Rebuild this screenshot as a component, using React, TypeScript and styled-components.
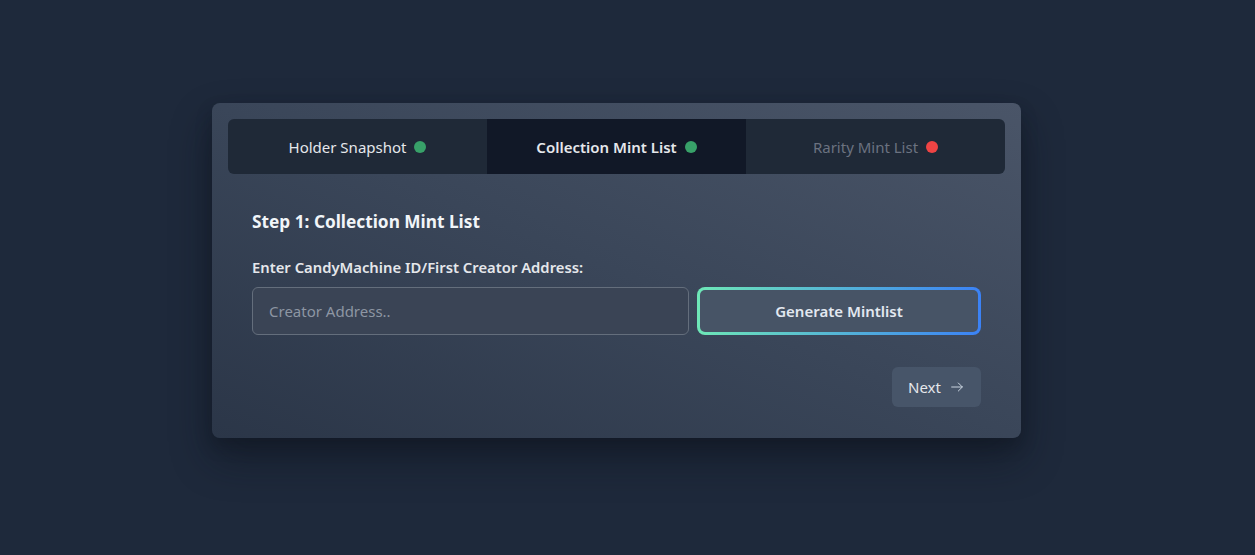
import React from "react";
import styled, { createGlobalStyle } from "styled-components";

const Global = createGlobalStyle`
  html, body { margin: 0; padding: 0; background: #1e293b; }
  body { font-family: "Segoe UI", "Noto Sans", "Open Sans", sans-serif; }
  * { box-sizing: border-box; }
`;

const Page = styled.div`
  min-height: 555px;
  display: flex;
  justify-content: flex-start;
  align-items: flex-start;
  padding: 103px 0 0 212px;
`;

const Card = styled.div`
  width: 809px;
  height: 335px;
  border-radius: 8px;
  background: linear-gradient(to top right, #2b3648 0%, #3a4659 50%, #4a5568 100%);
  box-shadow: 0 20px 40px rgba(10, 15, 25, 0.45), 0 8px 16px rgba(10, 15, 25, 0.25);
  padding: 16px;
  display: flex;
  flex-direction: column;
`;

const Tabs = styled.div`
  display: grid;
  grid-template-columns: repeat(3, 1fr);
  height: 55px;
  background: #1f2937;
  border-radius: 6px;
  overflow: hidden;
`;

const Tab = styled.div<{ $active?: boolean; $disabled?: boolean }>`
  display: flex;
  align-items: center;
  justify-content: center;
  gap: 8px;
  font-size: 15px;
  font-weight: ${(p) => (p.$active ? 600 : 400)};
  color: ${(p) => (p.$disabled ? "#6b7280" : "#e5e7eb")};
  background: ${(p) => (p.$active ? "#111827" : "transparent")};
`;

const Dot = styled.span<{ $color: string }>`
  width: 12px;
  height: 12px;
  border-radius: 50%;
  background: ${(p) => p.$color};
  display: inline-block;
`;

const Body = styled.div`
  padding: 36px 24px 0 24px;
  display: flex;
  flex-direction: column;
`;

const Heading = styled.h2`
  margin: 0;
  font-size: 17.25px;
  font-weight: 700;
  color: #f1f5f9;
  line-height: 24px;
`;

const Label = styled.label`
  margin-top: 23px;
  font-size: 14.8px;
  font-weight: 600;
  color: #e5e7eb;
  line-height: 20px;
`;

const Row = styled.div`
  margin-top: 10px;
  display: flex;
  gap: 8px;
`;

const Input = styled.input`
  width: 437px;
  height: 48px;
  border-radius: 6px;
  border: 1px solid #646e7c;
  background: #3a4455;
  padding: 0 16px;
  font-family: inherit;
  font-size: 15px;
  color: #e5e7eb;
  outline: none;
  &::placeholder { color: #8d96a3; }
`;

const GradientButton = styled.button`
  flex: 1;
  height: 48px;
  border-radius: 8px;
  border: 3px solid transparent;
  background:
    linear-gradient(#475466, #475466) padding-box,
    linear-gradient(to right, #6ee7b7, #3b82f6) border-box;
  font-family: inherit;
  font-size: 15px;
  font-weight: 600;
  color: #e2e8f0;
  cursor: pointer;
`;

const Footer = styled.div`
  margin-top: 32px;
  display: flex;
  justify-content: flex-end;
`;

const NextButton = styled.button`
  height: 40px;
  width: 89px;
  border: none;
  border-radius: 6px;
  background: #475569;
  color: #e5e7eb;
  font-family: inherit;
  font-size: 15px;
  display: flex;
  align-items: center;
  justify-content: center;
  gap: 8px;
  cursor: pointer;
`;

export default function App() {
  return (
    <>
      <Global />
      <Page>
        <Card>
          <Tabs>
            <Tab>
              Holder Snapshot <Dot $color="#38a169" />
            </Tab>
            <Tab $active>
              Collection Mint List <Dot $color="#38a169" />
            </Tab>
            <Tab $disabled>
              Rarity Mint List <Dot $color="#ef4444" />
            </Tab>
          </Tabs>
          <Body>
            <Heading>Step 1: Collection Mint List</Heading>
            <Label>Enter CandyMachine ID/First Creator Address:</Label>
            <Row>
              <Input placeholder="Creator Address.." />
              <GradientButton>Generate Mintlist</GradientButton>
            </Row>
            <Footer>
              <NextButton>
                Next
                <svg width="16" height="16" viewBox="0 0 24 24" fill="none" stroke="#cbd5e1" strokeWidth="1.5" strokeLinecap="round" strokeLinejoin="round">
                  <path d="M4 12h16M14 6l6 6-6 6" />
                </svg>
              </NextButton>
            </Footer>
          </Body>
        </Card>
      </Page>
    </>
  );
}
